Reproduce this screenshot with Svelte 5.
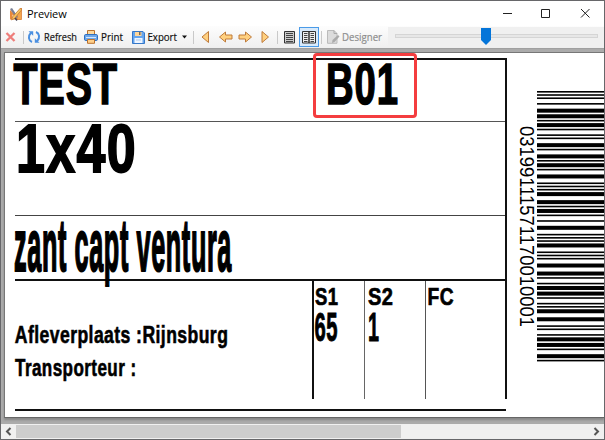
<script>
  const digitWidths = {
    0: 'nnwwn', 1: 'wnnnw', 2: 'nwnnw', 3: 'wwnnn', 4: 'nnwnw',
    5: 'wnwnn', 6: 'nwwnn', 7: 'nnnww', 8: 'wnnwn', 9: 'nwnwn'
  };
  const code = '03199111571170010001';

  // Interleaved 2 of 5: bars carry the even digits, spaces the odd ones.
  function encode(text) {
    let pattern = 'nnnn';
    for (let i = 0; i < text.length - 1; i += 2) {
      const a = digitWidths[text[i]];
      const b = digitWidths[text[i + 1]];
      for (let k = 0; k < 5; k++) pattern += a[k] + b[k];
    }
    pattern += 'wnn';
    const unit = 270.4 / 168.5;
    const out = [];
    let y = 0;
    [...pattern].forEach((c, i) => {
      const h = c === 'w' ? unit * 2.5 : unit;
      if (i % 2 === 0) out.push({ y, h });
      y += h;
    });
    return out;
  }
  const bars = encode(code);
</script>

{#snippet fit(text, w, h, x, y, size, length, weight)}
  <svg class="fit" width={w} height={h}>
    <text {x} {y} font-size={size} textLength={length} lengthAdjust="spacingAndGlyphs" stroke-width={weight}>{text}</text>
  </svg>
{/snippet}

<div class="window">
  <header class="title">
    <svg width="14" height="14" viewBox="0 0 14 14">
      <path d="M1 3 12 12.5H1z" fill="#e8893b" />
      <path d="M3.5 7.5 7 10.5H3.500z" fill="#fff3e0" />
      <path d="M12.500 1v11.500H8V7z" fill="#f3a64e" stroke="#d9772c" stroke-width=".7" />
      <path d="M1 2 3 1l6 9-2 1z" fill="#7a7f94" />
      <path d="m11.500 1-8 9-1 3 3-1.500 7-8.500z" fill="#f8c65f" stroke="#bd702f" stroke-width=".7" />
      <path d="m6 11 2 2.500" stroke="#445" stroke-width="1.500" />
    </svg>
    <span class="name">Preview</span>
    <svg class="controls" width="92" height="14" viewBox="0 0 92 14" fill="none" stroke="#222">
      <path d="M2 6.500h9" />
      <path d="M40.500 2.500h8v8h-8z" />
      <path d="m80 2 8.500 8.500m0-8.500L80 10.500" />
    </svg>
  </header>

  <div class="toolbar">
    <svg class="x" width="11" height="12" viewBox="0 0 11 12"><path d="m1.500 2 8 8m0-8-8 8" stroke="#ee7d7a" stroke-width="2.300" /></svg>
    <i class="sep"></i>
    <svg class="refresh" width="14" height="14" viewBox="0 0 14 14" fill="none" stroke="#4a8fe0" stroke-width="2">
      <path d="M5 12C1.500 10.500.8 6 3.800 3" />
      <path d="M9 2c3.500 1.500 4.200 6 1.200 9" />
      <path d="M1.500 1.200h4.700v4.600z" fill="#4a8fe0" stroke="none" />
      <path d="M12.500 12.800H7.800V8.200z" fill="#4a8fe0" stroke="none" />
    </svg>
    <span class="t"><svg width="34" height="18"><text x="0" y="13" textLength="33" lengthAdjust="spacingAndGlyphs">Refresh</text></svg></span>
    <svg class="print" width="14" height="14" viewBox="0 0 14 14">
      <path d="M3.500.500h7v5h-7z" fill="#fbd9a0" stroke="#b9712f" />
      <rect x=".5" y="4.500" width="13" height="6" rx="1.300" fill="#6da7ea" stroke="#2f6fc0" />
      <path d="M2 7.500h10" stroke="#d5e8ff" />
      <path d="M3.500 9.500h7v3.800h-7z" fill="#ffd08a" stroke="#b9712f" />
    </svg>
    <span class="t"><svg width="24" height="18"><text x="0" y="13" textLength="22" lengthAdjust="spacingAndGlyphs">Print</text></svg></span>
    <svg class="save" width="13" height="13" viewBox="0 0 13 13">
      <path d="M.500.500h10.500l1.500 1.500v10.500h-12z" fill="#65a5ee" stroke="#3678c8" />
      <path d="M3 1h6.500v4H3z" fill="#ffd79b" />
      <path d="M7 1h1.500v3H7z" fill="#7b6a55" />
      <path d="M2.500 7h8v5h-8z" fill="#eef5ff" />
      <path d="M4 9h5" stroke="#a9c9ef" />
    </svg>
    <span class="t"><svg width="30" height="18"><text x="-0.5" y="13" textLength="29.500" lengthAdjust="spacingAndGlyphs">Export</text></svg></span>
    <svg class="caret" width="5" height="4"><path d="M0 .5h5L2.500 3.500z" fill="#111" /></svg>
    <i class="sep two"></i>
    <svg class="nav" width="70" height="14" viewBox="0 0 70 14" fill="#ffd07f" stroke="#bf7b3a">
      <path d="M7.500 1.500v11L1 7z" />
      <path d="m18.500 7 6-5v3h6.500v4h-6.500v3z" />
      <path d="m50.500 7-6-5v3H38v4h6.500v3z" />
      <path d="M61 1.500v11L67.500 7z" />
    </svg>
    <i class="sep three"></i>
    <svg class="page-one" width="11" height="13" viewBox="0 0 11 13">
      <path d="M.500.500h10v11.500H.500z" fill="#ccc" stroke="#333" />
      <path d="M2 2.500h7M2 4.500h7M2 6.500h7M2 8.500h7M2 10.500h7" stroke="#444" />
    </svg>
    <span class="selected">
      <svg width="14" height="13" viewBox="0 0 14 13">
        <path d="M.500.500H7v11.500H.500zM7 .500h6.500v11.500H7z" fill="#eee" stroke="#333" />
        <path d="M2 2.500h3.500M2 4.500h3.500M2 6.500h3.500M2 8.500h3.500M2 10.500h3.500M8.500 2.500H12M8.500 4.500H12M8.500 6.500H12M8.500 8.500H12M8.500 10.500H12" stroke="#444" />
      </svg>
    </span>
    <i class="sep four"></i>
    <svg class="design" width="13" height="14" viewBox="0 0 13 14">
      <path d="M.500.500h6.500l3 3v9.800H.500z" fill="#dcdcdc" stroke="#bbb" />
      <path d="M7 .500v3h3" fill="none" stroke="#aaa" />
      <path d="m5 13 .500-3L11 5l1.500 1.500L7.500 12z" fill="#aaa" />
    </svg>
    <span class="t off"><svg width="42" height="18"><text x="-1" y="13" textLength="40" lengthAdjust="spacingAndGlyphs">Designer</text></svg></span>
    <div class="slider">
      <div class="track"></div>
      <svg class="thumb" width="10" height="17"><path d="M0 0h10v12l-5 5-5-5z" fill="#0475d9" /></svg>
    </div>
  </div>

  <main>
    <div class="paper">
      <section class="label">
        <div class="boxed">
          <div class="row first">
            {@render fit('TEST', 300, 60, -1.5, 43.5, 57, 104.5, 1.6)}
            {@render fit('B01', 180, 60, 11, 43.5, 57, 73, 1.6)}
          </div>
          <div class="row second">{@render fit('1x40', 480, 93, 1, 49.5, 69, 121, 1.8)}</div>
          <div class="row third">{@render fit('zant capt ventura', 480, 62, -1, 55, 75, 218, 2.2)}</div>
          <div class="row fourth">
            <div class="address">
              {@render fit('Afleverplaats :Rijnsburg', 290, 75, -0.2, 62, 23, 213.5, 0.6)}
              {@render fit('Transporteur :', 290, 30, 0, 20, 23, 121.5, 0.6)}
            </div>
            <div class="cell s1">
              {@render fit('S1', 50, 27, 1, 23.5, 24, 23.5, 0.7)}
              {@render fit('65', 50, 40, 0.5, 32.5, 41.5, 23.5, 1)}
            </div>
            <div class="cell s2">
              {@render fit('S2', 50, 27, 3, 23.5, 24, 25.5, 0.7)}
              {@render fit('1', 50, 40, 3, 32.5, 41.5, 11.500, 1)}
            </div>
            <div class="cell fc">{@render fit('FC', 50, 27, 1.5, 23.5, 24, 26.5, 0.7)}</div>
          </div>
        </div>
        <div class="foot"></div>
      </section>
      <svg class="digits" width="30" height="270">
        <text transform="translate(12.5 34) rotate(90)" font-size="20" textLength="201" lengthAdjust="spacingAndGlyphs">{code}</text>
      </svg>
      <svg class="bars" width="68" height="271">
        {#each bars as bar}
          <rect x="0" y={bar.y} width="68" height={bar.h} />
        {/each}
      </svg>
      <div class="highlight"></div>
    </div>
  </main>

  <footer>
    <svg width="15" height="13" viewBox="0 0 15 13"><path d="M9.500 3 6 6.500 9.500 10" /></svg>
    <div class="scroll-thumb"></div>
    <svg class="end" width="15" height="13" viewBox="0 0 15 13"><path d="M5.500 3 9 6.500 5.500 10" /></svg>
  </footer>
</div>

<style>
  .window {
    box-sizing: border-box;
    width: 605px;
    height: 440px;
    display: flex;
    flex-direction: column;
    overflow: hidden;
    border: 1px solid #67676a;
    background: #fff;
    font-family: 'Open Sans', 'Noto Sans', sans-serif;
  }
  svg { display: block; flex: none; }
  .title {
    height: 25px;
    display: flex;
    align-items: center;
    padding-left: 8px;
    flex: none;
  }
  .name { font-size: 11px; margin-left: 4px; width: 50px; letter-spacing: -0.1px; }
  .controls { margin-left: auto; margin-right: 11px; }
  .toolbar {
    height: 22px;
    flex: none;
    display: flex;
    align-items: center;
    background: linear-gradient(#fdfdfd, #efefef);
    padding-left: 4px;
  }
  .sep { width: 1px; height: 13px; background: #c9c9c9; margin-left: 7px; flex: none; }
  .refresh { margin-left: 3px; }
  .t { font-size: 11.5px; color: #111; margin-left: 3px; height: 18px; }
  .t svg { overflow: visible; }
  .t text { fill: currentColor; stroke: currentColor; stroke-width: 0.2; }
  .t.off { color: #8d8d8d; }
  .print { margin-left: 6px; }
  .save { margin-left: 7px; }
  .caret { margin-left: 4px; }
  .two { margin-left: 6px; }
  .nav { margin-left: 7px; }
  .three { margin-left: 6px; }
  .page-one { margin-left: 6px; }
  .selected {
    box-sizing: border-box;
    width: 20px;
    height: 20px;
    margin-left: 4px;
    border: 1px solid #4a9be8;
    background: #d8eafb;
    display: flex;
    align-items: center;
    justify-content: center;
  }
  .four { margin-left: 2px; }
  .design { margin-left: 5px; }
  .slider {
    margin-left: auto;
    width: 216px;
    height: 20px;
    background: #f0f0f0;
    position: relative;
    display: flex;
    align-items: center;
  }
  .track {
    box-sizing: border-box;
    width: 203px;
    height: 4px;
    margin: 0 0 3px 7px;
    border: 1px solid #d5d5d5;
    background: #e7e7e7;
  }
  .thumb { position: absolute; left: 93px; top: 1px; }
  main {
    height: 376px;
    flex: none;
    box-sizing: border-box;
    padding: 3px 0 0 3px;
    background: #ababab;
    border-top: 1px solid #a0a0a0;
  }
  .paper {
    height: 364px;
    border: 1px solid #777;
    border-right: 0;
    border-bottom-color: #666;
    box-shadow: 0 2px 2px #888;
    background: #fff;
    display: flex;
    position: relative;
  }
  .label { width: 492px; margin: 5px 0 0 10px; flex: none; }
  .boxed { height: 341px; box-sizing: border-box; border-top: 2px solid #111; border-right: 2px solid #111; }
  .row { display: flex; box-sizing: border-box; }
  .first { height: 62px; border-bottom: 1px solid #555; }
  .second { height: 94px; border-bottom: 1px solid #444; }
  .third { height: 65px; border-bottom: 2px solid #111; }
  .fourth { height: 118px; }
  .fit { overflow: visible; }
  .fit text {
    font-family: 'Liberation Sans', Arial, sans-serif;
    font-weight: 700;
    letter-spacing: 0.025em;
    fill: #000;
    stroke: #000;
  }
  .address { width: 297px; display: flex; flex-direction: column; flex: none; }
  .cell { box-sizing: border-box; flex: none; }
  .s1 { width: 52px; border-left: 2px solid #111; }
  .s2 { width: 61px; border-left: 1px solid #666; }
  .fc { width: 79px; border-left: 1px solid #555; }
  .foot { height: 2px; margin-top: 10px; width: 491px; background: #111; }
  .digits { margin-top: 39px; }
  .digits text { font-family: 'Liberation Sans', Arial, sans-serif; fill: #000; }
  .bars { margin-top: 38px; }
  .highlight {
    position: absolute;
    left: 308px;
    top: 0;
    width: 98px;
    height: 59px;
    border: 3px solid #f43d3f;
    border-radius: 4px;
  }
  footer {
    flex: none;
    height: 15px;
    display: flex;
    align-items: center;
    background: #f0f0f0;
  }
  footer path { fill: none; stroke: #555; stroke-width: 2; }
  .scroll-thumb { width: 385px; height: 13px; background: #cdcdcd; }
  .end { margin-left: auto; }
</style>
